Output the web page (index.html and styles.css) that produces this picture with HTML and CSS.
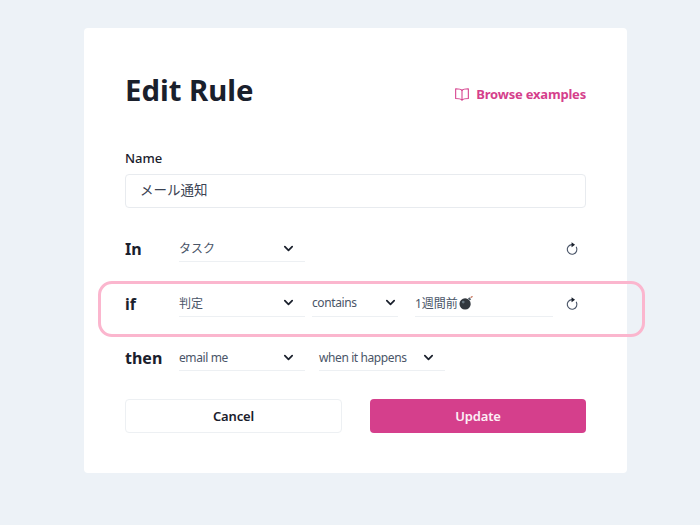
FILE: index.html
```html
<!DOCTYPE html>
<html lang="en">
<head>
    <meta charset="UTF-8">
    <meta name="viewport" content="width=device-width, initial-scale=1.0">
    <title>Edit Rule</title>
    <link rel="stylesheet" href="styles.css">
</head>
<body>
    <div class="card">
        <header class="card-head">
            <h1>Edit Rule</h1>
            <a href="#" class="browse-link">
                <svg class="book-icon" viewBox="0 0 24 24" fill="none" stroke="currentColor" stroke-width="1.6" stroke-linecap="round" stroke-linejoin="round">
                    <path d="M12 6.500C10.500 5 8 4.200 2.500 4.200v14.600c5.500 0 8 .8 9.500 2.200 1.500-1.400 4-2.200 9.500-2.200V4.200C16 4.200 13.500 5 12 6.500z"/>
                    <path d="M12 6.500V21"/>
                </svg>
                Browse examples
            </a>
        </header>

        <div class="name-label">Name</div>
        <div class="name-input">メール通知</div>

        <div class="rule-row row-in">
            <div class="rule-label">In</div>
            <div class="dropdown w-main">
                <span>タスク</span>
                <svg class="chevron" viewBox="0 0 12 12"><path d="M2 4l4 4 4-4"/></svg>
            </div>
            <svg class="reset-icon" viewBox="0 0 16 16"><path d="M13 6.500A5.500 5.500 0 1 1 8 3.500"/><path class="arrow" d="M7.500 .8l4 2.900-4 2.900z"/></svg>
        </div>

        <div class="rule-row row-if">
            <div class="rule-label">if</div>
            <div class="dropdown w-main">
                <span>判定</span>
                <svg class="chevron" viewBox="0 0 12 12"><path d="M2 4l4 4 4-4"/></svg>
            </div>
            <div class="dropdown w-op">
                <span class="latin">contains</span>
                <svg class="chevron" viewBox="0 0 12 12"><path d="M2 4l4 4 4-4"/></svg>
            </div>
            <div class="value-input">
                <span>1週間前</span>
                <svg class="bomb" viewBox="0 0 16 16">
                    <circle cx="6.500" cy="9.500" r="6" fill="#31373d"/>
                    <circle cx="4.500" cy="7.500" r="1.500" fill="#66757f"/>
                    <path d="M10.500 5l1.500-1.500" stroke="#55606a" stroke-width="2.800"/>
                    <path d="M12.500 3c.4-.9 1-1.300 2-1.200" stroke="#c1694f" stroke-width="1.300" fill="none"/>
                </svg>
            </div>
            <svg class="reset-icon" viewBox="0 0 16 16"><path d="M13 6.500A5.500 5.500 0 1 1 8 3.500"/><path class="arrow" d="M7.500 .8l4 2.900-4 2.900z"/></svg>
        </div>

        <div class="rule-row row-then">
            <div class="rule-label">then</div>
            <div class="dropdown w-main">
                <span class="latin">email me</span>
                <svg class="chevron" viewBox="0 0 12 12"><path d="M2 4l4 4 4-4"/></svg>
            </div>
            <div class="dropdown w-main">
                <span class="latin">when it happens</span>
                <svg class="chevron" viewBox="0 0 12 12"><path d="M2 4l4 4 4-4"/></svg>
            </div>
        </div>

        <div class="actions">
            <button class="btn btn-cancel">Cancel</button>
            <button class="btn btn-update">Update</button>
        </div>
    </div>
</body>
</html>
```

FILE: styles.css
```css
body {
    font-family: "Noto Sans", "Noto Sans CJK JP", sans-serif;
    margin: 0;
    padding: 28px 0 0 84px;
    height: 525px;
    box-sizing: border-box;
    overflow: hidden;
    background-color: #edf2f7;
    color: #1a202c;
}
.card {
    width: 543px;
    height: 445px;
    box-sizing: border-box;
    padding: 41px 41px 0;
    background-color: white;
    border-radius: 4px;
}
.card-head {
    display: flex;
    justify-content: space-between;
    align-items: center;
    height: 42px;
    margin-bottom: 37px;
}
h1 {
    margin: 0;
    font-size: 29.300px;
    line-height: 42px;
    font-weight: 700;
}
.browse-link {
    display: flex;
    align-items: center;
    gap: 6px;
    padding-top: 8px;
    color: #d53f8c;
    font-size: 13px;
    letter-spacing: -0.2px;
    font-weight: 700;
    text-decoration: none;
}
.book-icon {
    width: 16px;
    height: 16px;
}
.name-label {
    font-size: 13px;
    font-weight: 500;
    line-height: 20px;
    margin-bottom: 6px;
}
.name-input {
    height: 34px;
    box-sizing: border-box;
    padding-left: 14px;
    border: 1px solid #e8ebef;
    border-radius: 4px;
    font-size: 13.500px;
    line-height: 30px;
    color: #3a4252;
    margin-bottom: 24px;
}
.rule-row {
    position: relative;
    display: flex;
    align-items: flex-start;
    height: 30px;
    margin-bottom: 24.600px;
}
.row-if::after {
    content: "";
    position: absolute;
    left: -27px;
    right: -59px;
    top: -6px;
    bottom: -20px;
    border: 3px solid #fbb6ce;
    border-radius: 14px;
}
.rule-label {
    width: 54px;
    flex: none;
    font-size: 16px;
    font-weight: 700;
    line-height: 35px;
}
.dropdown {
    display: flex;
    justify-content: space-between;
    align-items: center;
    height: 30px;
    box-sizing: border-box;
    padding-top: 3px;
    border-bottom: 1px solid #edf0f3;
    font-size: 12px;
    color: #4a5568;
    flex: none;
}
.latin {
    letter-spacing: -0.4px;
}
.w-main {
    width: 126px;
    padding-left: 0;
    padding-right: 11px;
}
.w-op {
    width: 86px;
    padding-right: 2px;
    margin-left: 7px;
}
.row-then .dropdown + .dropdown {
    margin-left: 14px;
}
.chevron {
    width: 11px;
    height: 11px;
    fill: none;
    stroke: #1a202c;
    stroke-width: 1.900;
    stroke-linecap: round;
    stroke-linejoin: round;
}
.value-input {
    display: flex;
    align-items: center;
    gap: 1px;
    width: 138px;
    height: 30px;
    box-sizing: border-box;
    padding-top: 3px;
    margin-left: 17px;
    border-bottom: 1px solid #edf0f3;
    font-size: 12px;
    color: #4a5568;
}
.bomb {
    width: 15px;
    height: 15px;
}
.reset-icon {
    position: absolute;
    left: 440px;
    top: 9px;
    width: 14px;
    height: 15px;
    fill: none;
    stroke: #4a5568;
    stroke-width: 1.300;
    stroke-linecap: round;
}
.reset-icon .arrow {
    fill: #1a202c;
    stroke: none;
}
.actions {
    display: flex;
    justify-content: space-between;
    margin-top: 27.800px;
}
.btn {
    height: 34px;
    padding: 0;
    border-radius: 4px;
    font-family: inherit;
    font-size: 13px;
    letter-spacing: -0.15px;
    font-weight: 600;
}
.btn-cancel {
    width: 217px;
    background-color: white;
    border: 1px solid #edf0f3;
    color: #1a202c;
}
.btn-update {
    width: 216px;
    background-color: #d53f8c;
    border: none;
    color: #fdf0f6;
}
```
